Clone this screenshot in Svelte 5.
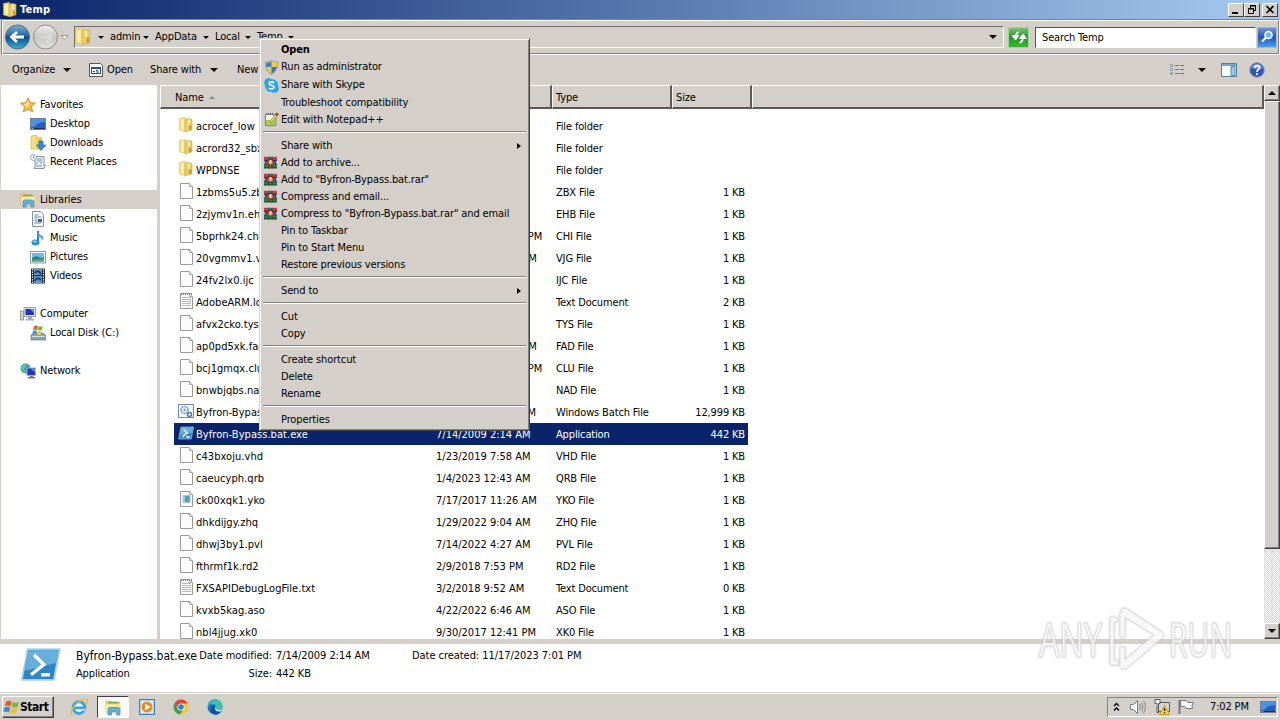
<script>
  const places = [
    { text: 'Favorites', icon: 'star', top: true },
    { text: 'Desktop', icon: 'desktop' },
    { text: 'Downloads', icon: 'downloads' },
    { text: 'Recent Places', icon: 'recent' },
    null,
    { text: 'Libraries', icon: 'explorer', top: true, selected: true },
    { text: 'Documents', icon: 'document' },
    { text: 'Music', icon: 'music' },
    { text: 'Pictures', icon: 'picture' },
    { text: 'Videos', icon: 'video' },
    null,
    { text: 'Computer', icon: 'computer', top: true },
    { text: 'Local Disk (C:)', icon: 'disk' },
    null,
    { text: 'Network', icon: 'network', top: true },
  ];

  const files = [
    ['folder', 'acrocef_low', '', 'File folder', ''],
    ['folder', 'acrord32_sbx', '', 'File folder', ''],
    ['folder', 'WPDNSE', '', 'File folder', ''],
    ['file', '1zbms5u5.zbx', '', 'ZBX File', '1 KB'],
    ['file', '2zjymv1n.ehb', '', 'EHB File', '1 KB'],
    ['file', '5bprhk24.chi', '10/21/2017 12:10 PM', 'CHI File', '1 KB'],
    ['file', '20vgmmv1.vjg', '12/17/2021 7:20 AM', 'VJG File', '1 KB'],
    ['file', '24fv2lx0.ijc', '', 'IJC File', '1 KB'],
    ['text', 'AdobeARM.log', '', 'Text Document', '2 KB'],
    ['file', 'afvx2cko.tys', '', 'TYS File', '1 KB'],
    ['file', 'ap0pd5xk.fad', '10/17/2021 7:20 AM', 'FAD File', '1 KB'],
    ['file', 'bcj1gmqx.clu', '10/21/2017 12:10 PM', 'CLU File', '1 KB'],
    ['file', 'bnwbjqbs.nad', '', 'NAD File', '1 KB'],
    ['batch', 'Byfron-Bypass.bat', '11/17/2023 7:01 PM', 'Windows Batch File', '12,999 KB'],
    ['powershell', 'Byfron-Bypass.bat.exe', '7/14/2009 2:14 AM', 'Application', '442 KB'],
    ['file', 'c43bxoju.vhd', '1/23/2019 7:58 AM', 'VHD File', '1 KB'],
    ['file', 'caeucyph.qrb', '1/4/2023 12:43 AM', 'QRB File', '1 KB'],
    ['yko', 'ck00xqk1.yko', '7/17/2017 11:26 AM', 'YKO File', '1 KB'],
    ['file', 'dhkdijgy.zhq', '1/29/2022 9:04 AM', 'ZHQ File', '1 KB'],
    ['file', 'dhwj3by1.pvl', '7/14/2022 4:27 AM', 'PVL File', '1 KB'],
    ['file', 'fthrmf1k.rd2', '2/9/2018 7:53 PM', 'RD2 File', '1 KB'],
    ['text', 'FXSAPIDebugLogFile.txt', '3/2/2018 9:52 AM', 'Text Document', '0 KB'],
    ['file', 'kvxb5kag.aso', '4/22/2022 6:46 AM', 'ASO File', '1 KB'],
    ['file', 'nbl4jjug.xk0', '9/30/2017 12:41 PM', 'XK0 File', '1 KB'],
  ];

  const menu = [
    { text: 'Open', bold: true },
    { text: 'Run as administrator', icon: 'shield', tall: true },
    { text: 'Share with Skype', icon: 'skype', tall: true },
    { text: 'Troubleshoot compatibility' },
    { text: 'Edit with Notepad++', icon: 'notepad' },
    null,
    { text: 'Share with', sub: true },
    { text: 'Add to archive...', icon: 'rar' },
    { text: 'Add to "Byfron-Bypass.bat.rar"', icon: 'rar' },
    { text: 'Compress and email...', icon: 'rar' },
    { text: 'Compress to "Byfron-Bypass.bat.rar" and email', icon: 'rar' },
    { text: 'Pin to Taskbar' },
    { text: 'Pin to Start Menu' },
    { text: 'Restore previous versions' },
    null,
    { text: 'Send to', sub: true },
    null,
    { text: 'Cut' },
    { text: 'Copy' },
    null,
    { text: 'Create shortcut' },
    { text: 'Delete' },
    { text: 'Rename' },
    null,
    { text: 'Properties' },
  ];
</script>

{#snippet icon(name, size = 16)}
  <svg class="icon" width={size} height={size} viewBox="0 0 16 16">
    {#if name === 'folder'}
      <path d="M1.500 1.500l6-1v14l-6-1.500z" fill="#f4de85" stroke="#dcbf5a" stroke-width=".6" />
      <path d="M7 2.500l3-1 4 .8v10.500l-6 2-1-.5z" fill="#ecce62" stroke="#cfa93c" stroke-width=".6" />
      <path d="M3 2.500l3-.5v11l-3-.8z" fill="#fcefad" />
      <path d="M10 2.500h1.500V8H10z" fill="#fff3b8" />
      <path d="M11 8.500h2.500v4.300L11 13.500z" fill="#c9a038" />
    {:else if name === 'file' || name === 'yko' || name === 'text'}
      <path d="M2.500.5h9l3 3v12h-12z" fill="#fcfcfc" stroke="#999" />
      <path d="M11.500.5v3h3" fill="#eee" stroke="#aaa" />
      {#if name === 'yko'}
        <rect x="4.500" y="4" width="8" height="8" fill="#9ccbd6" />
        <rect x="7" y="5" width="4.500" height="6" fill="#4f9fba" />
      {:else if name === 'text'}
        <path d="M3 1h11" stroke="#888" stroke-width="2" stroke-dasharray="1 1" />
        <path d="M4 4.500h9M4 6.500h9M4 8.500h9M4 10.500h9M4 12.500h9" stroke="#a9c0ce" />
      {/if}
    {:else if name === 'batch'}
      <rect x=".5" y="1.500" width="15" height="13" fill="#eef5fa" stroke="#7390a8" />
      <circle cx="6.500" cy="7" r="3.500" fill="none" stroke="#6f94b1" stroke-width="1.500" stroke-dasharray="1.500 .7" />
      <circle cx="6.500" cy="7" r="1.200" fill="#6f94b1" />
      <circle cx="11.500" cy="11.500" r="2" fill="none" stroke="#4d7696" stroke-width="1.400" />
    {:else if name === 'powershell'}
      <path d="M3 2h12.500l-2.300 12H.7z" fill="#2f86c2" stroke="#a5d2ea" stroke-width=".7" />
      <path d="M3.300 2.400h11.700l-1 5-12 3z" fill="#86c3e6" opacity=".65" />
      <path d="M5.500 4.200L9.300 8l-5 4M8.300 12h3.400" fill="none" stroke="#fff" stroke-width="1.300" />
    {:else if name === 'star'}
      <path d="M8 .8l2.100 4.900 5.300.4-4 3.500 1.200 5.300L8 12.100l-4.600 2.800 1.200-5.300-4-3.500 5.300-.4z" fill="#fbbb3a" stroke="#dc8a35" />
      <path d="M8 3l1.200 3.500L8 10 5 11.500 6 9 3.500 7l3-.5z" fill="#ffe88c" />
    {:else if name === 'desktop' || name === 'show'}
      <rect x=".5" y="2.500" width="15" height="11" fill="#275dbd" stroke="#6f7e92" />
      <path d="M1 3h14v3Q8 6 4 11H1z" fill="#4b93e4" />
      <path d="M1 12.500h14" stroke="#192f62" />
      <path d="M1.500 12.500h2" stroke="#75c866" />
    {:else if name === 'downloads'}
      <path d="M1 1l6-.7v13l-6 1z" fill="#f5df83" stroke="#d3b044" stroke-width=".6" />
      <path d="M7 2h5v12l-5 1z" fill="#e9ca5c" />
      <path d="M9 6h4v4h3l-5 5.500L6.500 10H9z" fill="#2b8ddb" stroke="#1a63a4" stroke-width=".6" />
    {:else if name === 'recent'}
      <path d="M5 2.500h9v9h1.500l-1.500 3H4l1-2z" fill="#e3edf3" stroke="#8096a4" />
      <path d="M7 5h5M7 7h5M6 9h2m2 0h2M6 12h6" stroke="#7a9db4" />
      <circle cx="3.500" cy="3.500" r="3" fill="#f8fbfc" stroke="#92a5b0" />
      <path d="M3.500 2v2H5" fill="none" stroke="#567" stroke-width=".7" />
    {:else if name === 'explorer'}
      <path d="M1 2h5l1 1h7v10H1z" fill="#f1d774" stroke="#caa443" stroke-width=".7" />
      <path d="M3 3.500h9" stroke="#65b06a" stroke-width="1.500" />
      <path d="M1 5h14v8H1z" fill="#f9e9a2" />
      <path d="M3 15V9.500Q3 8 5 8h7q2 0 2 1.500V15h-3v-3H6v3z" fill="#60b2dd" stroke="#3a87ba" stroke-width=".7" />
    {:else if name === 'document'}
      <path d="M2.500.5h8l3 3v12h-11z" fill="#fff" stroke="#7f93a5" />
      <path d="M4.500 4h4M4.500 6h7M4.500 8h3M4.500 10h3M4.500 12h7" stroke="#6389ae" />
      <path d="M8 8h4v3H8z" fill="#2e699a" />
    {:else if name === 'music'}
      <path d="M8 1v11" stroke="#217fbd" stroke-width="2" />
      <path d="M7.500 0q1 4 5 6 2 2-1 5 1-4-4-5z" fill="#48a7dd" />
      <ellipse cx="5.500" cy="12.500" rx="4" ry="3" fill="#2c91cc" />
      <ellipse cx="4.800" cy="11.500" rx="2" ry="1" fill="#9bd8f4" />
    {:else if name === 'picture'}
      <rect x=".5" y="2.500" width="15" height="11.500" fill="#fff" stroke="#8b9aa6" />
      <path d="M2 4h12v8.500H2z" fill="#73bce5" />
      <path d="M2 9q4-3 7-1t5 0v4.500H2z" fill="#2d7e8a" />
      <path d="M2 11l12-1v2.500H2z" fill="#5fae75" />
    {:else if name === 'video'}
      <rect x="1" y=".5" width="14" height="15" fill="#25303c" />
      <path d="M2.500 1v14M13.500 1v14" stroke="#d7dde0" stroke-dasharray="1.500 1" />
      <path d="M4 1h8v6H4zM4 8h8v7H4z" fill="#6496c5" />
      <path d="M5 5q3-4 6 1M5 13q2-5 6-1" stroke="#203e63" stroke-width="2" fill="none" />
    {:else if name === 'computer'}
      <rect x=".5" y="5" width="3" height="9" fill="#cddabc" stroke="#718162" stroke-width=".7" />
      <rect x="4" y="1.500" width="11.500" height="9" fill="#dce1e9" stroke="#9aa2b0" />
      <path d="M5.500 3H14v6H5.500z" fill="#2332bf" />
      <path d="M10 3h4v4z" fill="#6e8bea" />
      <path d="M8 11h4v2h2v1.500H6V13h2z" fill="#9faac2" />
    {:else if name === 'disk'}
      <path d="M1 10l3-2h9l3 3v4H1z" fill="#8da4b1" stroke="#607786" stroke-width=".7" />
      <path d="M2 11.500h13" stroke="#d6e4ea" />
      <path d="M12 13h2" stroke="#59c854" />
      <path d="M4 1q2-1 4 0L7.300 5Q5 4 3.200 5z" fill="#e65d2c" />
      <path d="M8.700 1q2 1 4 0l-.8 4q-2 1-4 0z" fill="#75b843" />
      <path d="M3 5.700q2-1 4 0l-.8 3.800q-2-1-4 0z" fill="#4294db" />
      <path d="M7.700 5.700q2 1 4 0L11 9.500q-2 1-4 0z" fill="#f4c33c" />
    {:else if name === 'network'}
      <circle cx="5.500" cy="5.500" r="5" fill="#2f9bb6" />
      <path d="M2 3q3-3 5-1L4 6q2 1 1 4-3-2-4-5z" fill="#6acb88" />
      <rect x="7" y="5" width="8.500" height="7.500" fill="#2734be" stroke="#a7b3d4" />
      <path d="M11 6h4v3z" fill="#768de6" />
      <path d="M10 13h3v1h2v1.500H8V14h2z" fill="#67759b" />
    {:else if name === 'shield'}
      <path d="M8 .5q3 2 6.500 1.500.8 9-6.500 13.500Q.7 11 1.500 2q3.500.5 6.500-1.500z" fill="#f4cd38" stroke="#9aa9b8" stroke-width="1.300" />
      <path d="M8 1.500v6H2.300Q2 5 2.300 2.800 5.500 3 8 1.500z" fill="#3f83d0" />
      <path d="M8 7.500h5.600Q12.500 12 8 14.600z" fill="#3477c9" />
    {:else if name === 'skype'}
      <circle cx="5" cy="5" r="4.700" fill="#1ea2e2" />
      <circle cx="11" cy="11" r="4.700" fill="#1ea2e2" />
      <circle cx="8" cy="8" r="7" fill="#24aaeb" />
      <path d="M10.800 5.300Q8 3.300 5.800 4.800 4.500 7 8 7.700q3.500.8 2.300 3Q8 12.700 5.200 10.700" fill="none" stroke="#fff" stroke-width="1.700" />
    {:else if name === 'notepad'}
      <path d="M1.500 2.500h11v12h-11z" fill="#fbfcef" stroke="#687063" />
      <path d="M3 2.500V1M5 2.500V1M7 2.500V1M9 2.500V1" stroke="#555" />
      <path d="M2 9q4-2 6 1l4-2v6H2z" fill="#a2cf53" />
      <path d="M6 10l6-7 2 1.500-6 7z" fill="#f5d54c" stroke="#79611f" stroke-width=".6" />
      <path d="M12 3l1.500-2.500L16 2l-2 2.500z" fill="#8c4a2e" />
    {:else if name === 'rar'}
      <path d="M0 1h16v4.500H0z" fill="#c53a3e" />
      <path d="M1 5.500h14v4H1z" fill="#3a4a9c" />
      <path d="M0 10h16v5H0z" fill="#1f8350" />
      <path d="M0 5.500h16M0 10h16M0 14.700h16" stroke="#29252b" />
      <path d="M5 1h6v2.500H5z" fill="#2b6d78" />
      <path d="M5 3.500h6v8H5z" fill="#5d3327" />
      <path d="M4.500 6h7v4.500h-7z" fill="#d9532f" />
      <path d="M6.700 5h2.600v4.500H6.700z" fill="#f8eac0" />
      <path d="M5 11.500h6V15H5z" fill="#24533e" />
      <path d="M8 10.500V15" stroke="#e1ba58" stroke-dasharray="1 1" />
    {:else if name === 'app'}
      <path d="M1.500 1.500h11l2 2v11h-13z" fill="#fff" stroke="#555" />
      <path d="M3 5h10v7H3z" fill="#2b4f93" />
      <path d="M4 7h8v4H4z" fill="#fff" />
      <path d="M5 9.500h2M8 8.500h2M8 10h3" stroke="#23498a" />
    {:else if name === 'views'}
      <path d="M1.500 2.500h2v2h-2zM1.500 6.500h2v2h-2zM1.500 10.500h2v2h-2z" fill="#fff" stroke="#8997a6" />
      <path d="M6 3.500h4m1 0h4M6 7.500h4m1 0h4M6 11.500h4m1 0h4" stroke="#687788" />
    {:else if name === 'pane'}
      <path d="M.5 1.500h15v13H.5z" fill="#fff" stroke="#547f9e" />
      <path d="M1 3h14" stroke="#75a9c8" stroke-width="2" />
      <path d="M10 4.500h4v9h-4z" fill="#9bcce6" stroke="#4d8fb8" />
    {:else if name === 'help'}
      <circle cx="8" cy="8" r="7.200" fill="#2d55b4" stroke="#8092b5" />
      <path d="M2.500 6q1-4 5.500-4t5.500 4q-5 2-11 0z" fill="#7896dd" />
      <path d="M5.600 6q0-2.400 2.500-2.400T10.500 6q0 1-1.400 1.800Q8 8.500 8 10" fill="none" stroke="#fff" stroke-width="1.700" />
      <circle cx="8" cy="12.200" r="1.100" fill="#fff" />
    {:else if name === 'search'}
      <circle cx="9.500" cy="6" r="3.500" fill="#72b4f1" stroke="#fff" stroke-width="1.600" />
      <path d="M7 8.500L3 12.500" stroke="#fff" stroke-width="2.200" />
    {:else if name === 'refresh'}
      <path d="M8 3Q4 3 4.500 8M1 6.500l3.500 4.500L8 6.500z" fill="#fff" stroke="#fff" stroke-width="1" />
      <path d="M8 14q4.500 0 4-5M8.500 9.500L12 5l3.500 4.500z" fill="#fff" stroke="#fff" stroke-width="1" />
    {:else if name === 'windows'}
      <path d="M3 2q2.500-1 5 .4L7 7Q4.500 5.500 1.800 6.800z" fill="#e8572a" />
      <path d="M9 2.900q2.500 1.200 6 0l-1.200 4.600q-3 1.200-5.800 0z" fill="#7cb93e" />
      <path d="M1.500 7.900q2.800-1.300 5.200 0l-1.200 4.800q-2.500-1.500-5.200-.4z" fill="#3d83d3" />
      <path d="M7.800 8.500q3 1.200 5.800 0l-1.200 4.700q-2.800 1.500-5.800 0z" fill="#f3bb32" />
    {:else if name === 'ie'}
      <circle cx="8" cy="8.500" r="5.200" fill="#dff3fc" stroke="#38a5dd" stroke-width="2.600" />
      <path d="M4 8.700h9.500" stroke="#38a5dd" stroke-width="2.200" />
      <path d="M10 10.500h5" stroke="#d4cfc8" stroke-width="1.700" />
      <path d="M2 15Q-1 13 4 7t10-6q3 .5 0 5" fill="none" stroke="#edbc37" stroke-width="1.300" />
    {:else if name === 'player'}
      <rect x=".5" y=".5" width="15" height="15" fill="#a7d4ed" stroke="#3c80b5" />
      <rect x="2" y="2" width="12" height="12" fill="#dceef7" />
      <circle cx="8" cy="8" r="5.500" fill="#f2871f" />
      <path d="M6.200 4.700L11.500 8l-5.300 3.300z" fill="#fff" />
    {:else if name === 'chrome'}
      <circle cx="8" cy="8" r="7.500" fill="#f6c62d" />
      <path d="M1.500 4.300A7.500 7.500 0 0 1 14.700 4.500H8L4.800 9.500z" fill="#df4434" />
      <path d="M1.500 4.300L5 10l4.700 1.500-2.800 3.900A7.500 7.500 0 0 1 1.500 4.300z" fill="#3ba052" />
      <circle cx="8" cy="8" r="3.600" fill="#fff" />
      <circle cx="8" cy="8" r="2.800" fill="#3778dc" />
    {:else if name === 'edge'}
      <circle cx="8" cy="8" r="7.500" fill="#1976c8" />
      <path d="M.6 7Q2 .5 8 .5q7 0 7.500 6 0 4-4.500 4-3-.5-1.700-2.500Q9 5 5 5 2 5 .6 8z" fill="#38c6a8" />
      <path d="M.6 7Q2 .5 8 .5q2 0 3 .8Q4 1 .6 7z" fill="#239ed8" />
      <path d="M8.500 7Q6 11 10 13q2.500 1 4.500-1-3 5-8 3.300Q2 13 4 8.500 6 5.500 8.500 7z" fill="#124f9e" />
      <path d="M9.500 6.500Q7.500 9 10 10.500q3 1 5-1-.5 2-2 3Q9 13 8 9.500q0-2 1.500-3z" fill="#e3f1ef" />
    {:else if name === 'sound'}
      <path d="M.5 5.500h3l4-4v13l-4-4h-3z" fill="#fff" stroke="#777" />
      <path d="M9.500 5q2 3 0 6M11.500 3.500q3 4.500 0 9M13.500 2q4 6 0 12" fill="none" stroke="#888" />
    {:else if name === 'lan'}
      <path d="M4.500 3.500h11v9h-11z" fill="#d7d7d3" stroke="#555" />
      <path d="M1 .5h5v4H4.500v9M1 .5v4h2v9h2" fill="#fff" stroke="#555" />
      <path d="M10.500 6l5 9.500h-10z" fill="#ffd42a" stroke="#ba8b00" stroke-width=".7" />
      <path d="M10.500 9v3m0 1v1.300" stroke="#222" stroke-width="1.400" />
    {:else if name === 'flag'}
      <path d="M1.500 1v14" stroke="#777" stroke-width="2" />
      <path d="M2.500 1.500h6l1 2h6l-1.500 3 .5 3H8l-1-2H2.500z" fill="#fff" stroke="#777" />
    {/if}
  </svg>
{/snippet}

<div class="screen">
  <header class="titlebar">
    {@render icon('folder')}
    <b>Temp</b>
    <div class="winbuttons">
      <span class="btn"><svg width="14" height="12"><path d="M3 9h6" stroke="#000" stroke-width="2" /></svg></span>
      <span class="btn"><svg width="14" height="12"><path d="M5.500 4V1.500h5v5H8M5 2h6M3 5h6" fill="none" stroke="#000" /><path d="M3.500 4.500h5v5h-5z" fill="none" stroke="#000" /></svg></span>
      <span class="btn close"><svg width="14" height="12"><path d="M3.500 2l7 7m0-7l-7 7" stroke="#000" stroke-width="1.600" /></svg></span>
    </div>
  </header>

  <nav class="navbar">
    <svg class="travel" width="72" height="30" viewBox="0 0 72 30">
      <defs>
        <linearGradient id="blue" x2="0" y2="1">
          <stop stop-color="#7fb0d0" /><stop offset=".45" stop-color="#23689f" />
          <stop offset=".5" stop-color="#0b4c87" /><stop offset="1" stop-color="#35b2dc" />
        </linearGradient>
        <linearGradient id="grey" x2="0" y2="1">
          <stop stop-color="#f2f1ef" /><stop offset=".5" stop-color="#c6c4c1" /><stop offset="1" stop-color="#e4e2df" />
        </linearGradient>
      </defs>
      <circle cx="17.500" cy="15" r="12" fill="url(#blue)" stroke="#4b6c88" />
      <path d="M24 15H12m5-5l-5.500 5 5.500 5" fill="none" stroke="#fff" stroke-width="2.800" />
      <circle cx="45.500" cy="15" r="12" fill="url(#grey)" stroke="#8b8b8b" />
      <path d="M39 15h12m-5-5l5.500 5-5.500 5" fill="none" stroke="#d9d7d4" stroke-width="2.600" />
      <path d="M61 13.500h7l-3.500 4z" fill="#fff" stroke="#999" />
    </svg>
    <div class="address">
      {@render icon('folder', 18)}
      <i class="down"></i><span style:width="33px">admin</span>
      <i class="down"></i><span style:width="48px">AppData</span>
      <i class="down"></i><span style:width="30px">Local</span>
      <i class="down"></i><span style:width="31px">Temp</span>
      <i class="down"></i>
      <i class="down last"></i>
    </div>
    <div class="refresh">{@render icon('refresh')}</div>
    <div class="searchbox">Search Temp</div>
    <div class="go">{@render icon('search')}</div>
  </nav>

  <div class="toolbar">
    <span style:width="51px">Organize</span><i class="down"></i>
    <span class="open">{@render icon('app')}Open</span>
    <span style:width="60px">Share with</span><i class="down"></i>
    <span class="new">New folder</span>
    <div class="tools">
      {@render icon('views')}
      <i class="down"></i>
      {@render icon('pane')}
      {@render icon('help')}
    </div>
  </div>

  <main>
    <aside>
      {#each places as place}
        <div class="place" class:top={place?.top} class:selected={place?.selected}>
          {#if place}
            {@render icon(place.icon)}
            <span>{place.text}</span>
          {/if}
        </div>
      {/each}
    </aside>
    <section class="list">
      <div class="heads">
        <div class="head name">Name <i class="up"></i></div>
        <div class="head date"></div>
        <div class="head type">Type</div>
        <div class="head size">Size</div>
        <div class="head rest"></div>
      </div>
      <div class="rows">
        {#each files as [kind, name, date, type, size]}
          <div class="row" class:picked={kind === 'powershell'}>
            {@render icon(kind)}
            <span class="c-name">{name}</span>
            <span class="c-date">{date}</span>
            <span class="c-type">{type}</span>
            <span class="c-size">{size}</span>
          </div>
        {/each}
      </div>
    </section>
    <div class="scroll">
      <span class="sbtn"><i class="arrow-up"></i></span>
      <span class="thumb"></span>
      <span class="track"></span>
      <span class="sbtn"><i class="arrow-down"></i></span>
    </div>
  </main>

  <footer class="details">
    {@render icon('powershell', 41)}
    <div class="info">
      <div><span class="big">Byfron-Bypass.bat.exe</span><span class="label">Date modified:</span><span class="value">7/14/2009 2:14 AM</span><span>Date created: 11/17/2023 7:01 PM</span></div>
      <div><span class="big small">Application</span><span class="label">Size:</span><span class="value">442 KB</span></div>
    </div>
  </footer>

  <div class="taskbar">
    <div class="start">{@render icon('windows', 17)}<b>Start</b></div>
    <div class="task">{@render icon('ie', 18)}</div>
    <div class="task active">{@render icon('explorer', 17)}</div>
    <div class="task">{@render icon('player')}</div>
    <div class="task">{@render icon('chrome')}</div>
    <div class="task">{@render icon('edge')}</div>
    <div class="tray">
      <svg width="7" height="10"><path d="M1 4l2.500-2.500L6 4M1 8.500L3.500 6 6 8.500" fill="none" stroke="#000" stroke-width="1.400" /></svg>
      {@render icon('sound')}
      {@render icon('lan')}
      {@render icon('flag')}
      <span class="clock">7:02 PM</span>
      {@render icon('show')}
    </div>
  </div>

  <div class="menu">
    {#each menu as item}
      {#if item}
        <div class="item" class:tall={item.tall} class:bold={item.bold}>
          <span class="slot">{#if item.icon}{@render icon(item.icon, item.icon === 'rar' ? 13 : 15)}{/if}</span>
          <span>{item.text}</span>
          {#if item.sub}<i class="right"></i>{/if}
        </div>
      {:else}
        <hr />
      {/if}
    {/each}
  </div>

  <svg class="watermark" width="210" height="76" viewBox="0 0 210 76">
    <g fill="#fff" fill-opacity=".85" stroke="#d5d5d5" stroke-width="1">
      <text x="7" y="52" textLength="63" lengthAdjust="spacingAndGlyphs">ANY</text>
      <text x="137" y="52" textLength="63" lengthAdjust="spacingAndGlyphs">RUN</text>
      <path fill-rule="evenodd" d="M90 4q2-2 5 0l35 23q4 3 0 6L95 63q-5 3-7-1V42h5v13l29-25-29-18v20h-5V8z" />
      <path d="M78 12h7v5h-3v38h4v5h-8z" />
    </g>
  </svg>
</div>

<style>
:global(body) {
  margin: 0;
  overflow: hidden;
}
.screen {
  position: relative;
  display: flex;
  flex-direction: column;
  width: 1280px;
  height: 720px;
  overflow: hidden;
  background: #d4cfc8;
  color: #000;
  font: 11px/14px "DejaVu Sans Condensed", "DejaVu Sans", sans-serif;
  font-stretch: condensed;
  letter-spacing: -0.15px;
  white-space: nowrap;
}
.icon, svg { display: block; flex: none; }
i { display: block; flex: none; }
.down {
  border: 4px solid transparent;
  border-top-color: #000;
  border-bottom: 0;
}
.titlebar {
  display: flex;
  align-items: center;
  height: 19px;
  padding: 0 2px;
  box-sizing: border-box;
  background: linear-gradient(90deg, #0a246a, #a6caf0);
  color: #fff;
}
.titlebar b { margin-left: 2px; letter-spacing: 0.2px; }
.winbuttons { display: flex; margin-left: auto; }
.btn {
  width: 14px;
  height: 12px;
  background: #d4cfc8;
  border: 1px solid;
  border-color: #fff #404040 #404040 #fff;
}
.close { margin-left: 2px; }
.navbar {
  display: flex;
  align-items: center;
  height: 36px;
  box-sizing: border-box;
  margin-left: 1px;
  border: 1px solid;
  border-color: #85827d #fff #fff #85827d;
  box-shadow: inset 1px 1px #fff, inset -1px -1px #85827d;
}
.travel { margin-left: -2px; }
.address {
  display: flex;
  align-items: center;
  width: 928px;
  height: 20px;
  margin-left: 2px;
  border: 1px solid;
  border-color: #716e6a #fff #fff #716e6a;
}
.address .down { margin: 0 6px 0 0; border-width: 3px; border-bottom: 0; }
.address .icon + .down { margin-left: 6px; }
.address .icon { margin-left: -1px; }
.address .down + .last { margin-left: auto; margin-right: 6px; border-width: 4px; border-bottom: 0; }
.refresh, .go {
  display: grid;
  place-items: center;
  width: 19px;
  height: 19px;
  border: 1px solid #9bd79a;
  background: linear-gradient(#7ac278, #259424 50%, #37b735);
}
.refresh { margin-left: 4px; }
.searchbox {
  width: 213px;
  height: 19px;
  margin-left: 6px;
  padding-left: 6px;
  border: 1px solid;
  border-color: #55524e #fff #fff #55524e;
  background: #fff;
  line-height: 20px;
}
.go {
  width: 18px;
  margin-left: 1px;
  border-color: #9db9de;
  background: linear-gradient(#6c94dc, #2455bd 50%, #46a1ed);
}
.toolbar {
  display: flex;
  align-items: center;
  height: 30px;
  padding-left: 12px;
}
.toolbar span { line-height: 16px; }
.toolbar .open { display: flex; gap: 3px; width: 46px; margin: 0 16px 0 17px; }
.toolbar > .down { margin-right: 0; }
.toolbar .new { width: 28px; margin-left: 19px; overflow: hidden; }
.tools { display: flex; align-items: center; margin-left: auto; margin-right: 15px; }
.tools .down { margin: 0 15px 0 13px; }
.tools .icon:last-child { margin-left: 12px; }
main { display: flex; height: 554px; }
aside {
  width: 157px;
  padding-top: 9px;
  box-sizing: border-box;
  border-top: 1px solid #fff;
  background: #fff;
  border-left: 1px solid #d4cfc8;
}
.place { display: flex; align-items: center; gap: 4px; height: 19px; padding-left: 29px; }
.place.top { padding-left: 19px; }
.place span { line-height: 16px; padding-top: 1px; }
.selected { background: #d4cfc8; }
.list {
  display: flex;
  flex-direction: column;
  flex: 1;
  margin-left: 3px;
  overflow: hidden;
  background: #fff;
}
.heads { display: flex; flex: none; height: 24px; background: #d4cfc8; }
.head {
  display: flex;
  align-items: center;
  gap: 5px;
  box-sizing: border-box;
  padding: 2px 0 0 3px;
  border: 1px solid #fff;
  border-right: 2px solid #5b5955;
  border-bottom: 2px solid #5b5955;
}
.head.name { width: 262px; padding-left: 14px; }
.head.date { width: 130px; }
.head.type { width: 120px; }
.head.size { width: 80px; }
.head.rest { flex: 1; }
.up { border: 3px solid transparent; border-top: 0; border-bottom-color: #8d8a86; }
.rows { padding: 6px 0 0 14px; }
.row {
  display: flex;
  align-items: center;
  width: 574px;
  height: 22px;
  box-sizing: border-box;
  padding-left: 4px;
}
.row .icon { margin-top: -2px; }
.row span { padding-top: 1px; }
.c-name { width: 240px; margin-left: 2px; letter-spacing: 0.05px; }
.c-date { width: 120px; letter-spacing: 0; }
.c-type { width: 120px; }
.c-size { width: 69px; text-align: right; }
.picked { background: #0a246a; color: #fff; }
.scroll { display: flex; flex-direction: column; width: 16px; }
.sbtn, .thumb {
  display: grid;
  place-items: center;
  box-sizing: border-box;
  height: 16px;
  border: 1px solid;
  border-color: #fff #404040 #404040 #fff;
  box-shadow: inset -1px -1px #85827d;
  background: #d4cfc8;
}
.thumb { height: 448px; }
.track { flex: 1; background: repeating-conic-gradient(#fff 0 25%, #d4cfc8 0 50%) 0 0 / 2px 2px; }
.arrow-up { border: 4px solid transparent; border-top: 0; border-bottom-color: #000; }
.arrow-down { border: 4px solid transparent; border-bottom: 0; border-top-color: #000; }
.details {
  display: flex;
  align-items: center;
  height: 48px;
  margin-top: 5px;
  padding-left: 20px;
  box-sizing: border-box;
  background: #fff;
  letter-spacing: -0.05px;
}
.details .icon { margin-top: -7px; }
.info { margin: -6px 0 0 15px; }
.info > div { display: flex; height: 18px; align-items: center; }
.info .big { width: 121px; font-size: 12px; letter-spacing: 0; }
.info .small { font-size: 11px; letter-spacing: -0.15px; }
.info .label { width: 75px; text-align: right; }
.info .value { width: 136px; margin-left: 4px; }
.taskbar {
  display: flex;
  align-items: center;
  height: 28px;
  box-sizing: border-box;
  padding: 1px 2px 0;
  border-top: 1px solid #d4cfc8;
  box-shadow: inset 0 1px #fff;
}
.start {
  display: flex;
  align-items: center;
  width: 50px;
  height: 20px;
  border: 1px solid;
  border-color: #fff #404040 #404040 #fff;
  box-shadow: inset -1px -1px #85827d;
}
.start b { font-size: 12px; letter-spacing: -0.45px; }
.task { display: grid; place-items: center; width: 34px; height: 22px; }
.start + .task { margin-left: 8px; }
.active {
  box-sizing: border-box;
  width: 32px;
  margin: 0 1px;
  border: 1px solid;
  border-color: #404040 #fff #fff #404040;
  background: #fbfaf9;
}
.tray {
  display: flex;
  align-items: center;
  height: 20px;
  width: 171px;
  margin-left: auto;
  padding-left: 5px;
  border: 1px solid;
  border-color: #85827d #fff #fff #85827d;
  box-sizing: border-box;
}
.tray .icon { margin-left: 8px; }
.tray svg:first-child + .icon { margin-left: 10px; }
.clock { margin-left: 16px; width: 42px; }
.menu {
  position: absolute;
  left: 259px;
  top: 38px;
  width: 271px;
  height: 393px;
  box-sizing: border-box;
  padding: 2px;
  border: 1px solid;
  border-color: #d4cfc8 #404040 #404040 #d4cfc8;
  box-shadow: inset 1px 1px #fff, inset -1px -1px #85827d;
  background: #d4cfc8;
}
.item { display: flex; align-items: center; height: 17px; letter-spacing: -0.13px; }
.tall { height: 18px; }
.bold { font-weight: bold; }
.slot { width: 17px; margin-left: 2px; }
.right { margin: 0 6px 0 auto; border: 3.5px solid transparent; border-left: 4px solid #000; border-right: 0; }
hr {
  height: 0;
  margin: 3px 1px 4px;
  border: 0;
  border-top: 1px solid #85827d;
  border-bottom: 1px solid #fff;
}
.watermark {
  position: absolute;
  left: 1032px;
  top: 605px;
  overflow: visible;
  filter: drop-shadow(0 0 1px #bbb);
  opacity: .8;
}
.watermark text {
  font: 48px "Open Sans", sans-serif;
  letter-spacing: 0;
}
</style>
